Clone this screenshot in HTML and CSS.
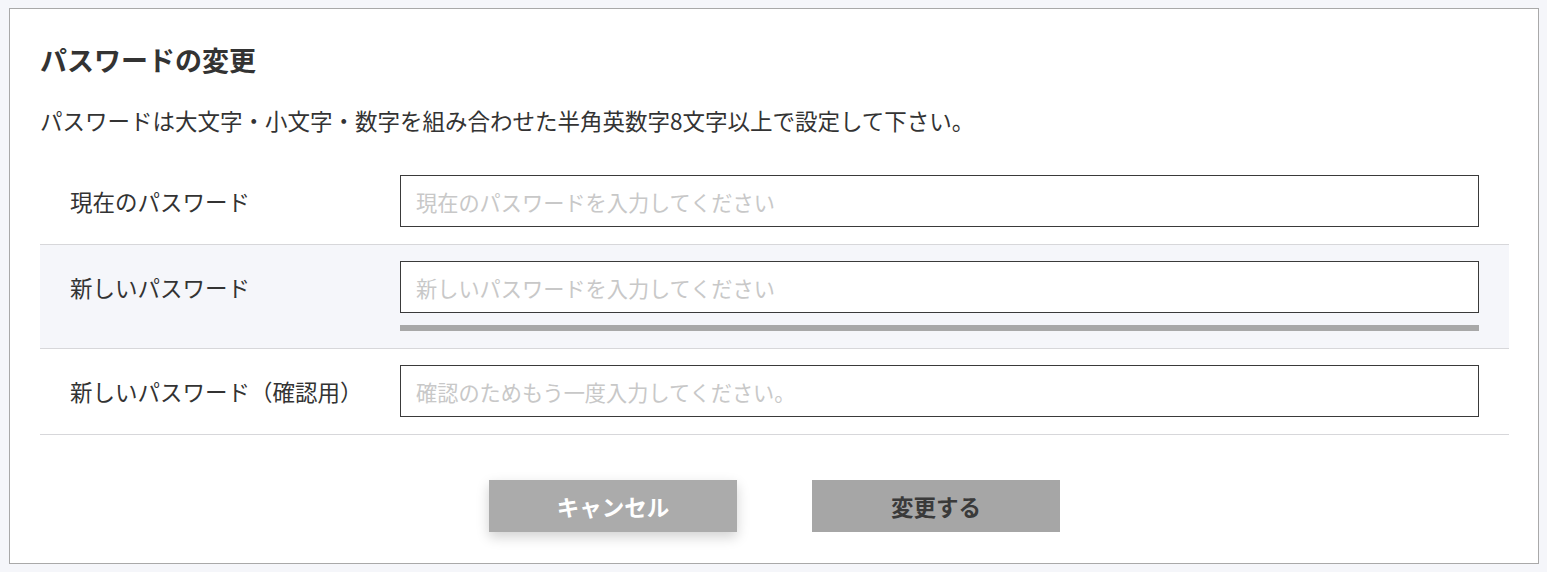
FILE: index.html
```html
<!DOCTYPE html>
<html lang="ja">
<head>
<meta charset="utf-8">
<title>パスワードの変更</title>
<link rel="stylesheet" href="styles.css">
</head>
<body>
<div class="card">
  <h1 class="title">パスワードの変更</h1>
  <p class="desc">パスワードは大文字・小文字・数字を組み合わせた半角英数字8文字以上で設定して下さい。</p>
  <div class="rows">
    <div class="row first">
      <div class="label">現在のパスワード</div>
      <div class="field"><input class="input" type="password" placeholder="現在のパスワードを入力してください"></div>
    </div>
    <div class="row shaded">
      <div class="label">新しいパスワード</div>
      <div class="field">
        <input class="input" type="password" placeholder="新しいパスワードを入力してください">
        <div class="meter"></div>
      </div>
    </div>
    <div class="row">
      <div class="label">新しいパスワード（確認用）</div>
      <div class="field"><input class="input" type="password" placeholder="確認のためもう一度入力してください。"></div>
    </div>
  </div>
  <div class="actions">
    <button class="btn btn-cancel" type="button">キャンセル</button>
    <button class="btn btn-submit" type="button">変更する</button>
  </div>
</div>
</body>
</html>
```
FILE: styles.css
```css
* { box-sizing: border-box; }
html, body { margin: 0; padding: 0; }
body {
  background: #f5f6fa;
  font-family: "Noto Sans CJK JP", "Noto Sans", sans-serif;
  color: #333;
  padding: 8px 8px 8px 9px;
}
.card {
  background: #fff;
  border: 1px solid #a9a9a9;
  height: 556px;
  padding: 31px 29px 0 30px;
}
.title {
  margin: 0;
  font-size: 27px;
  line-height: 40px;
  font-weight: 700;
  color: #333;
}
.desc {
  margin: 23px 0 0;
  font-size: 22.5px;
  line-height: 34px;
  color: #333;
}
.rows { margin-top: 21px; }
.row {
  display: grid;
  grid-template-columns: 360px 1fr;
  padding: 16px 30px 17px 0;
  border-bottom: 1px solid #d7d7da;
}
.row.first { padding-top: 17px; }
.row.shaded { background: #f5f6fa; }
.label {
  padding-left: 30px;
  height: 52px;
  line-height: 52px;
  font-size: 22.5px;
  color: #333;
}
.field { display: flex; flex-direction: column; }
.input {
  height: 52px;
  width: 100%;
  border: 1px solid #3a3a3a;
  border-radius: 0;
  padding: 0 15px;
  font-family: "Noto Sans CJK JP", "Noto Sans", sans-serif;
  font-size: 21.2px;
  color: #333;
  background: #fff;
  outline: none;
}
.input::placeholder { color: #c8c8c8; }
.meter {
  margin-top: 12px;
  height: 6px;
  background: #a8a8a8;
}
.actions {
  display: flex;
  justify-content: center;
  gap: 75px;
  margin-top: 45px;
}
.btn {
  width: 248px;
  height: 52px;
  border: none;
  border-radius: 0;
  font-family: "Noto Sans CJK JP", "Noto Sans", sans-serif;
  font-size: 22.5px;
  font-weight: 700;
  cursor: pointer;
}
.btn-cancel {
  background: #ababab;
  color: #fff;
  box-shadow: 0 5px 12px rgba(0, 0, 0, 0.18);
}
.btn-submit {
  background: #a6a6a6;
  color: #3a3a3a;
}
```
